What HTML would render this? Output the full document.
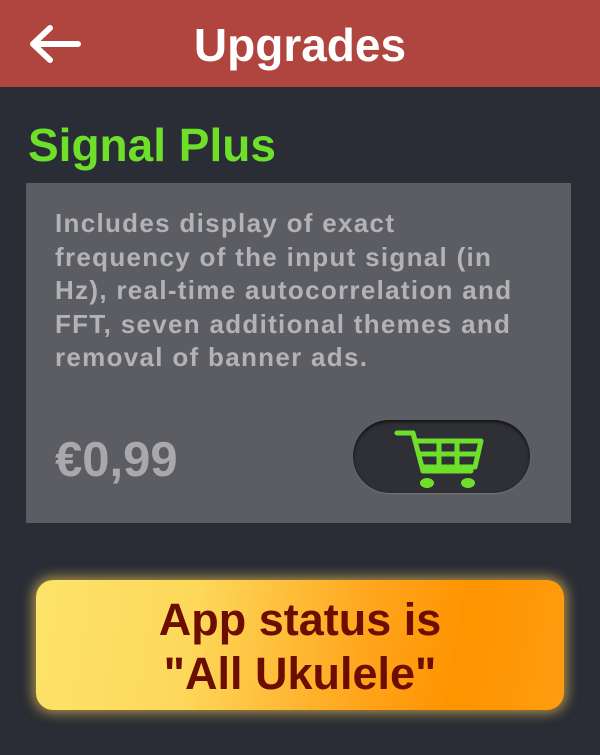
<!DOCTYPE html>
<html><head><style>
body{margin:0;width:600px;height:755px;background:#2a2d35;font-family:"Liberation Sans",sans-serif;position:relative;overflow:hidden}
.hdr{position:absolute;left:0;top:0;width:600px;height:87px;background:#b0443e}
.hdr h1{margin:0;position:absolute;left:0;width:600px;top:18px;text-align:center;color:#fff;font-size:46px;font-weight:bold}
.title{position:absolute;left:28px;top:118px;color:#6fe02a;font-size:46px;font-weight:bold}
.card{position:absolute;left:26px;top:183px;width:545px;height:340px;background:#5b5d63}
.desc{position:absolute;left:29px;top:24px;width:520px;color:#b3b3b5;font-size:26px;line-height:33.5px;font-weight:bold;letter-spacing:1.3px;white-space:nowrap}
.price{position:absolute;left:29px;top:249px;color:#a9a9ab;font-size:49px;font-weight:bold}
.pill{position:absolute;left:327px;top:237px;width:177px;height:73px;border-radius:37px;background:#2f3036;box-shadow:inset 0 2px 3px #111,0 1px 1px #777}
.btn{position:absolute;left:36px;top:580px;width:528px;height:130px;border-radius:17px;background:linear-gradient(100deg,#fde36a 0%,#fdd85a 30%,#ffa51c 62%,#ff9300 80%,#ff9d10 100%);box-shadow:0 0 12px 3px rgba(255,210,90,.6)}
.btn div{text-align:center;color:#6b0d00;font-size:45px;font-weight:bold;line-height:54px;padding-top:13px}
</style></head><body>
<div class="hdr">
<svg style="position:absolute;left:28px;top:24px" width="54" height="40" viewBox="0 0 54 40"><path d="M50 20H6M22 4L5 20L22 36" fill="none" stroke="#fff" stroke-width="6" stroke-linecap="round" stroke-linejoin="round"/></svg>
<h1>Upgrades</h1></div>
<div class="title">Signal Plus</div>
<div class="card">
<div class="desc">Includes display of exact<br>frequency of the input signal (in<br>Hz), real-time autocorrelation and<br>FFT, seven additional themes and<br>removal of banner ads.</div>
<div class="price">€0,99</div>
<div class="pill"><svg style="position:absolute;left:40px;top:3px" width="100" height="68" viewBox="0 0 100 68">
<g fill="none" stroke="#6fe02a" stroke-width="5" stroke-linejoin="round" stroke-linecap="round">
<path d="M4 10H20L30 48H78"/><path d="M22 18H88L82 44H30"/><path d="M26 31H85M46 18V44M64 18V44"/></g>
<ellipse cx="34" cy="60" rx="7" ry="5" fill="#6fe02a"/><ellipse cx="75" cy="60" rx="7" ry="5" fill="#6fe02a"/></svg></div>
</div>
<div class="btn"><div>App status is<br>"All Ukulele"</div></div>
</body></html>
